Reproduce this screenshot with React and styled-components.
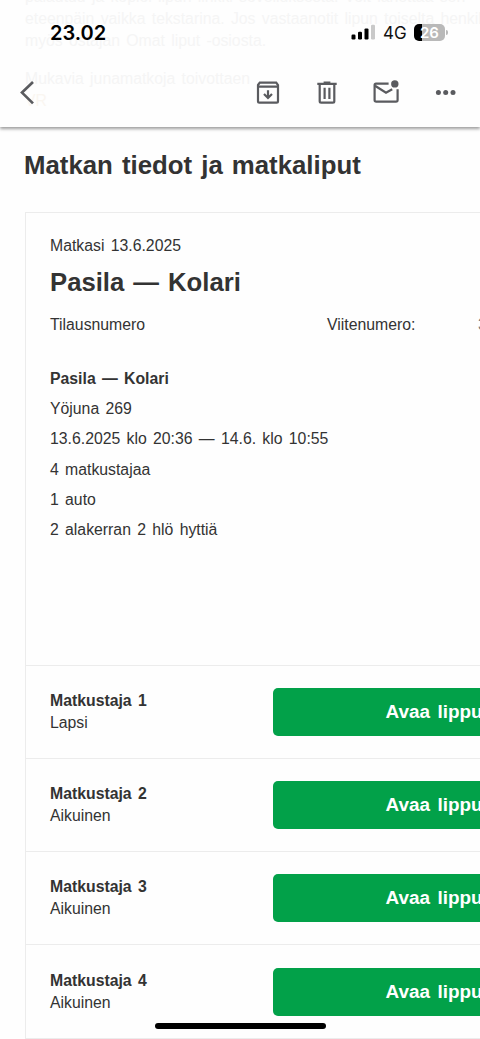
import React from "react";
import styled, { createGlobalStyle } from "styled-components";

const passengers = [
  { name: "Matkustaja 1", type: "Lapsi" },
  { name: "Matkustaja 2", type: "Aikuinen" },
  { name: "Matkustaja 3", type: "Aikuinen" },
  { name: "Matkustaja 4", type: "Aikuinen" },
];

const details = [
  "Yöjuna 269",
  "13.6.2025 klo 20:36 — 14.6. klo 10:55",
  "4 matkustajaa",
  "1 auto",
  "2 alakerran 2 hlö hyttiä",
];

const StatusBar = () => (
  <StyledStatus>
    <Clock>23.02</Clock>
    <StatusRight>
      <svg width="25" height="16" viewBox="0 0 25 16">
        <rect x="0.5" y="10.5" width="4" height="5" rx="1.2" />
        <rect x="7" y="7.8" width="4" height="7.7" rx="1.2" />
        <rect x="13.5" y="4.4" width="4" height="11.1" rx="1.2" />
        <rect x="20" y="0.7" width="4" height="14.8" rx="1.2" fill="#c9c9c9" />
      </svg>
      <Network>4G</Network>
      <Battery>26</Battery>
      <BatteryTip />
    </StatusRight>
  </StyledStatus>
);

const Toolbar = () => (
  <StyledToolbar>
    <IconButton aria-label="Takaisin" $width={16}>
      <svg width="16" height="26" viewBox="0 0 16 26">
        <path d="M14 2 L3 12.6 L14 23.4" strokeWidth="2.7" />
      </svg>
    </IconButton>
    <Actions>
      <IconButton aria-label="Arkistoi" $width={24}>
        <svg width="24" height="24" viewBox="0 0 24 24">
          <path d="M2 4 L3.8 1.6 H20.2 L22 4 V20.2 Q22 21.6 20.6 21.6 H3.4 Q2 21.6 2 20.2 Z M2 5.6 H22" />
          <path d="M12 9.2 V16.4 M8 13 L12 17 L16 13" />
        </svg>
      </IconButton>
      <IconButton aria-label="Poista" $width={20}>
        <svg width="20" height="24" viewBox="0 0 20 24">
          <path d="M0.3 2.8 H19.7 M6.6 1.6 H13.4 M2.7 2.8 V20.2 Q2.7 21.6 4.1 21.6 H15.9 Q17.3 21.6 17.3 20.2 V2.8" />
          <path d="M7.6 6.8 V18 M12.4 6.8 V18" />
        </svg>
      </IconButton>
      <IconButton aria-label="Merkitse lukemattomaksi" $width={26}>
        <svg width="26" height="24" viewBox="0 0 26 24">
          <path d="M15.6 2.6 H3 Q1.6 2.6 1.6 4 V19 Q1.6 20.6 3.2 20.6 H23 Q24.6 20.6 24.6 19 V8.2" />
          <path d="M2 4.8 L13 11.8 L19.2 8.2" />
          <circle cx="21.8" cy="2.9" r="3.7" fill="#5a5b5f" stroke="none" />
        </svg>
      </IconButton>
      <IconButton aria-label="Lisää" $width={20}>
        <svg width="20" height="24" viewBox="0 0 20 24">
          <g fill="#5a5b5f" stroke="none">
            <circle cx="2.4" cy="11.6" r="2.5" />
            <circle cx="9.7" cy="11.6" r="2.5" />
            <circle cx="17" cy="11.6" r="2.5" />
          </g>
        </svg>
      </IconButton>
    </Actions>
  </StyledToolbar>
);

const App = () => {
  return (
    <>
      <GlobalStyle />
      <Screen>
        <Header>
          <MailBehind aria-hidden="true">
            <p>palautuu ja kopioi lipun linkki sovelluksesta. Voit lähettää sen</p>
            <p>eteenpäin vaikka tekstarina. Jos vastaanotit lipun toiselta henkil</p>
            <p>myös ostajan Omat liput -osiosta.</p>
            <Greeting>Mukavia junamatkoja toivottaen</Greeting>
            <Sender>VR</Sender>
          </MailBehind>
          <StatusBar />
          <Toolbar />
        </Header>
        <Title>Matkan tiedot ja matkaliput</Title>
        <Card>
          <Trip>
            <TripDate>Matkasi 13.6.2025</TripDate>
            <Route>Pasila — Kolari</Route>
            <Numbers>
              <span>Tilausnumero</span>
              <span>Viitenumero:</span>
              <Reference>3</Reference>
            </Numbers>
            <Details>
              <strong>Pasila — Kolari</strong>
              {details.map((line) => (
                <span key={line}>{line}</span>
              ))}
            </Details>
          </Trip>
          {passengers.map(({ name, type }) => (
            <Passenger key={name}>
              <PassengerInfo>
                <strong>{name}</strong>
                <span>{type}</span>
              </PassengerInfo>
              <OpenTicket>Avaa lippu</OpenTicket>
            </Passenger>
          ))}
        </Card>
        <HomeIndicator />
      </Screen>
    </>
  );
};

const GlobalStyle = createGlobalStyle`
  * {
    box-sizing: border-box;
    margin: 0;
    padding: 0;
  }
  body {
    background: #fefefe;
    overflow: hidden;
  }
`;

const Screen = styled.div`
  position: relative;
  width: 480px;
  height: 1039px;
  overflow: hidden;
  background: #fefefe;
  color: #333;
  font-family: "Liberation Sans", Arial, sans-serif;
  font-size: 15.8px;
  word-spacing: 0.12em;
`;

const Header = styled.header`
  position: relative;
  height: 127px;
  background: #fefefe;
  box-shadow: 0 2px 3px rgba(0, 0, 0, 0.38);
`;

/* The mail scrolled under the translucent header */
const MailBehind = styled.div`
  position: absolute;
  inset: 0;
  padding-left: 25px;
  overflow: hidden;
  color: #f5f5f5;
  white-space: nowrap;
  p {
    line-height: 22px;
  }
  p:first-child {
    margin-top: -14px;
  }
`;

const Greeting = styled.p`
  margin-top: 16px;
`;

const Sender = styled.p`
  color: #faf6f1;
`;

const StyledStatus = styled.div`
  position: relative;
  display: flex;
  align-items: center;
  justify-content: space-between;
  height: 64px;
  padding: 0 32px 0 50px;
  word-spacing: normal;
`;

const Clock = styled.span`
  padding-top: 1px;
  color: #000;
  font-family: Inter, sans-serif;
  font-size: 20px;
  font-weight: 600;
  line-height: 24px;
`;

const StatusRight = styled.div`
  display: flex;
  align-items: center;
`;

const Network = styled.span`
  margin-left: 7px;
  width: 31px;
  padding-top: 1px;
  color: #111;
  font-family: Inter, sans-serif;
  font-size: 17px;
  line-height: 20px;
`;

const Battery = styled.span`
  width: 31px;
  height: 17px;
  border-radius: 5px;
  background: linear-gradient(to right, #000 8px, #b9b9b9 8px);
  color: #fff;
  font-family: Inter, sans-serif;
  font-size: 15px;
  font-weight: 600;
  line-height: 17px;
  text-align: center;
`;

const BatteryTip = styled.span`
  width: 2px;
  height: 5px;
  margin-left: 1px;
  border-radius: 0 2px 2px 0;
  background: #b9b9b9;
`;

const StyledToolbar = styled.div`
  position: relative;
  display: flex;
  align-items: center;
  justify-content: space-between;
  height: 57px;
  padding: 0 24px 0 19px;
`;

const Actions = styled.div`
  display: flex;
  align-items: center;
  gap: 36.6px;
`;

const IconButton = styled.button`
  width: ${({ $width }) => $width}px;
  border: none;
  background: none;
  svg {
    display: block;
    overflow: visible;
    fill: none;
    stroke: #5a5b5f;
    stroke-width: 2.2;
  }
`;

const Title = styled.h1`
  margin: 22px 0 0 24px;
  font-size: 25.8px;
  line-height: 32px;
  white-space: nowrap;
`;

const Card = styled.section`
  width: 594px;
  margin: 30.5px 0 0 25px;
  border: 1px solid #ececec;
`;

const Trip = styled.div`
  height: 452px;
  padding: 23.5px 24px 0;
`;

const TripDate = styled.p`
  line-height: 20px;
`;

const Route = styled.h2`
  margin-top: 10px;
  font-size: 25.7px;
  line-height: 32px;
`;

const Numbers = styled.div`
  display: grid;
  grid-template-columns: 277px 151px 1fr;
  margin-top: 17px;
  line-height: 20px;
`;

const Reference = styled.span`
  color: #777;
`;

const Details = styled.div`
  display: flex;
  flex-direction: column;
  margin-top: 29px;
  line-height: 30.2px;
`;

const Passenger = styled.div`
  display: flex;
  align-items: center;
  height: 93.3px;
  padding-left: 24px;
  border-top: 1px solid #ececec;
`;

const PassengerInfo = styled.div`
  display: flex;
  flex-direction: column;
  width: 223px;
  line-height: 22px;
`;

const OpenTicket = styled.button`
  flex-shrink: 0;
  width: 322px;
  height: 48px;
  border: none;
  border-radius: 5px;
  background: #02a149;
  color: #fff;
  font-family: inherit;
  font-size: 18.9px;
  font-weight: bold;
  word-spacing: 0.12em;
`;

const HomeIndicator = styled.div`
  position: absolute;
  left: 155px;
  bottom: 10px;
  width: 171px;
  height: 6px;
  border-radius: 3px;
  background: #000;
`;

export default App;
